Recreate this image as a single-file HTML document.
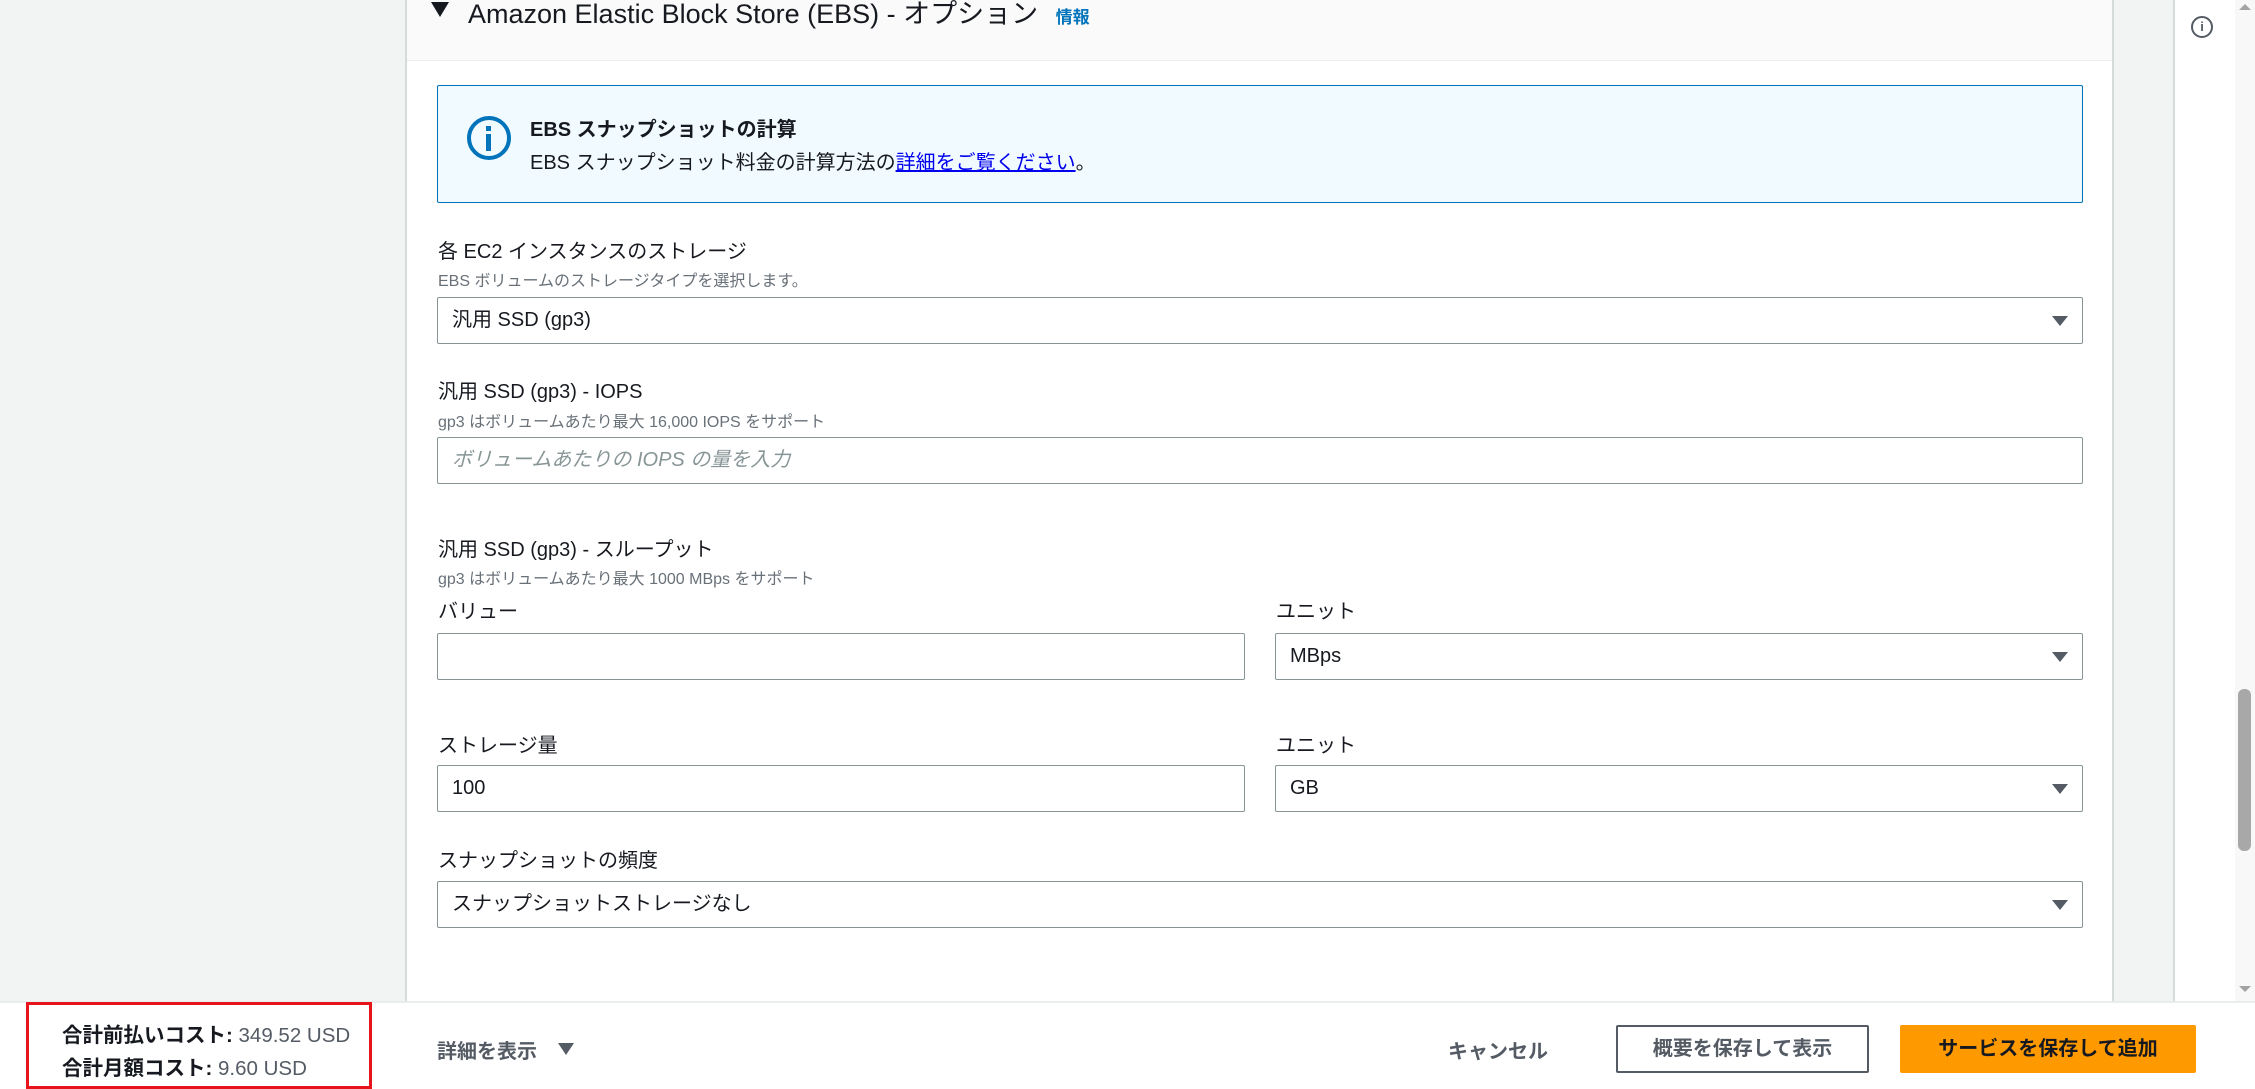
<!DOCTYPE html>
<html><head><meta charset="utf-8"><style>
*{box-sizing:border-box;margin:0;padding:0}
body{width:2255px;height:1089px;position:relative;overflow:hidden;background:#f2f3f3;font-family:"Liberation Sans","Noto Sans CJK JP",sans-serif;color:#16191f}
.a{position:absolute}
.card{left:405px;top:0;width:1709px;height:1001px;background:#fff;border-left:2px solid #d5dbdb;border-right:2px solid #d5dbdb}
.hdr{left:407px;top:0;width:1705px;height:61px;background:#fafafa;border-bottom:1px solid #eaeded}
.lbl{font-size:20px;left:438px}
.desc{font-size:16px;color:#687078;left:438px}
.box{border:1px solid #879596;border-radius:2px;background:#fff;height:47px;font-size:20px;padding-left:14px;line-height:45px}
.tri{position:absolute;right:14px;top:18px;width:0;height:0;border-left:8px solid transparent;border-right:8px solid transparent;border-top:10px solid #545b64}
</style></head><body>
<div class="a card"></div>
<div class="a hdr"></div>
<div class="a" style="left:431px;top:2px;width:0;height:0;border-left:9px solid transparent;border-right:9px solid transparent;border-top:15px solid #16191f"></div>
<div class="a" style="left:468px;top:-8px;font-size:27px">Amazon Elastic Block Store (EBS) - オプション <span style="font-size:17px;color:#0073bb;font-weight:bold;margin-left:10px">情報</span></div>
<div class="a" style="left:437px;top:85px;width:1646px;height:118px;background:#f1faff;border:1px solid #0073bb;border-radius:2px"></div>
<div class="a" style="left:467px;top:116px;border:4px solid #0073bb;border-radius:50%;width:44px;height:44px"></div>
<div class="a" style="left:486px;top:126px;width:5px;height:5px;background:#0073bb"></div>
<div class="a" style="left:486px;top:134px;width:5px;height:17px;background:#0073bb"></div>
<div class="a" style="left:530px;top:113px;font-size:20px;font-weight:bold">EBS スナップショットの計算</div>
<div class="a" style="left:530px;top:146px;font-size:20px">EBS スナップショット料金の計算方法の<span style="color:#0000ee;text-decoration:underline">詳細をご覧ください</span>。</div>
<div class="a lbl" style="top:235px">各 EC2 インスタンスのストレージ</div>
<div class="a desc" style="top:267px">EBS ボリュームのストレージタイプを選択します。</div>
<div class="a box" style="left:437px;top:297px;width:1646px">汎用 SSD (gp3)<div class="tri"></div></div>
<div class="a lbl" style="top:375px">汎用 SSD (gp3) - IOPS</div>
<div class="a desc" style="top:408px">gp3 はボリュームあたり最大 16,000 IOPS をサポート</div>
<div class="a box" style="left:437px;top:437px;width:1646px;color:#879596;font-style:italic">ボリュームあたりの IOPS の量を入力</div>
<div class="a lbl" style="top:533px">汎用 SSD (gp3) - スループット</div>
<div class="a desc" style="top:565px">gp3 はボリュームあたり最大 1000 MBps をサポート</div>
<div class="a lbl" style="top:595px">バリュー</div>
<div class="a lbl" style="top:595px;left:1276px">ユニット</div>
<div class="a box" style="left:437px;top:633px;width:808px"></div>
<div class="a box" style="left:1275px;top:633px;width:808px">MBps<div class="tri"></div></div>
<div class="a lbl" style="top:729px">ストレージ量</div>
<div class="a lbl" style="top:729px;left:1276px">ユニット</div>
<div class="a box" style="left:437px;top:765px;width:808px">100</div>
<div class="a box" style="left:1275px;top:765px;width:808px">GB<div class="tri"></div></div>
<div class="a lbl" style="top:844px">スナップショットの頻度</div>
<div class="a box" style="left:437px;top:881px;width:1646px">スナップショットストレージなし<div class="tri"></div></div>
<div class="a" style="left:2173px;top:0;width:82px;height:1001px;background:#fff;border-left:2px solid #d5dbdb"></div>
<div class="a" style="left:2235px;top:0;width:20px;height:1001px;background:#f8f8f8"></div>
<div class="a" style="left:2238px;top:689px;width:13px;height:162px;background:#a8a8a8;border-radius:6px"></div>
<div class="a" style="left:2239px;top:4px;border-left:6px solid transparent;border-right:6px solid transparent;border-bottom:6px solid #a3a3a3"></div>
<div class="a" style="left:2239px;top:986px;border-left:6px solid transparent;border-right:6px solid transparent;border-top:6px solid #a3a3a3"></div>
<div class="a" style="left:2191px;top:16px;width:22px;height:22px;border:2.5px solid #545b64;border-radius:50%;font-size:13px;font-weight:bold;text-align:center;line-height:17px;color:#545b64">i</div>
<div class="a" style="left:0;top:1001px;width:2255px;height:88px;background:#fff;border-top:2px solid #eaeded"></div>
<div class="a" style="left:26px;top:1002px;width:346px;height:87px;border:3px solid #e8141c"></div>
<div class="a" style="left:62px;top:1018px;font-size:20.5px"><b>合計前払いコスト:</b> <span style="color:#545b64">349.52 USD</span></div>
<div class="a" style="left:62px;top:1051px;font-size:20.5px"><b>合計月額コスト:</b> <span style="color:#545b64">9.60 USD</span></div>
<div class="a" style="left:437px;top:1035px;font-size:20px;font-weight:bold;color:#545b64">詳細を表示</div>
<div class="a" style="left:558px;top:1043px;width:0;height:0;border-left:8px solid transparent;border-right:8px solid transparent;border-top:12px solid #545b64"></div>
<div class="a" style="left:1448px;top:1035px;font-size:20px;font-weight:bold;color:#545b64">キャンセル</div>
<div class="a" style="left:1616px;top:1025px;width:253px;height:48px;border:2px solid #545b64;border-radius:2px;font-size:20px;font-weight:bold;color:#545b64;text-align:center;line-height:44px">概要を保存して表示</div>
<div class="a" style="left:1900px;top:1025px;width:296px;height:48px;background:#ff9900;border-radius:2px;font-size:20px;font-weight:bold;color:#16191f;text-align:center;line-height:48px">サービスを保存して追加</div>
</body></html>
